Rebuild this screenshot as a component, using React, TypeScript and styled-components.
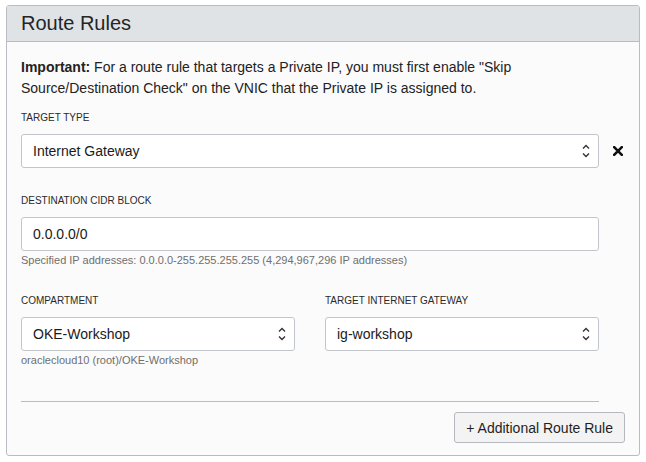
import React from "react";
import styled, { createGlobalStyle } from "styled-components";

const Global = createGlobalStyle`
  html, body { background: #ffffff; }
  body {
    margin: 5px 6px;
    font-family: "Liberation Sans", Arial, sans-serif;
    color: #1f1f1f;
  }
  * { box-sizing: border-box; }
`;

const Panel = styled.section`
  border: 1px solid #b9bdc1;
  border-radius: 3px;
  background: #fbfbfb;
  overflow: hidden;
`;

const Header = styled.header`
  height: 36px;
  display: flex;
  align-items: center;
  padding: 0 14px;
  background: #dfe3e6;
  border-bottom: 1px solid #b9bdc1;
`;

const Title = styled.h2`
  margin: 0;
  font-size: 20px;
  font-weight: 400;
  color: #252525;
`;

const Body = styled.div`
  padding: 15px 14px 12px 14px;
`;

const Note = styled.p`
  margin: 0 0 12px 0;
  font-size: 14px;
  line-height: 21px;
  color: #222;
  strong { font-weight: 700; }
`;

const FieldArea = styled.div`
  width: calc(100% - 26px);
`;

const Field = styled.div<{ $top?: number }>`
  margin-top: ${(p) => p.$top ?? 0}px;
`;

const Label = styled.div`
  font-size: 10px;
  line-height: 14px;
  text-transform: uppercase;
  color: #2a2a2a;
  margin-bottom: 9px;
`;

const Row = styled.div`
  display: flex;
  align-items: center;
  width: calc(100% + 26px);
`;

const Control = styled.div`
  position: relative;
  flex: 1;
  height: 34px;
  display: flex;
  align-items: center;
  padding: 0 11px;
  background: #ffffff;
  border: 1px solid #c2c6ca;
  border-radius: 3px;
  font-size: 14px;
  color: #1a1a1a;
`;

const Chevrons = styled.svg`
  position: absolute;
  right: 8px;
  top: 50%;
  transform: translateY(-50%);
`;

const RemoveButton = styled.button`
  width: 26px;
  height: 34px;
  border: 0;
  background: transparent;
  padding: 0 0 0 14px;
  display: flex;
  align-items: center;
  cursor: pointer;
`;

const Help = styled.div`
  font-size: 11px;
  line-height: 14px;
  margin-top: 2px;
  color: #6f6f6f;
`;

const Grid = styled.div`
  display: grid;
  grid-template-columns: 1fr 1fr;
  column-gap: 30px;
  margin-top: 27px;
`;

const Divider = styled.hr`
  border: 0;
  border-top: 1px solid #b9bdc1;
  margin: 34px 0 0 0;
`;

const Footer = styled.div`
  display: flex;
  justify-content: flex-end;
  margin-top: 10px;
`;

const AddButton = styled.button`
  height: 31px;
  padding: 0 11px;
  font-family: "Liberation Sans", Arial, sans-serif;
  font-size: 14px;
  color: #1f1f1f;
  background: #f3f3f3;
  border: 1px solid #b5b9bd;
  border-radius: 3px;
`;

const SelectChevrons = () => (
  <Chevrons width="8" height="16" viewBox="0 0 8 16">
    <path d="M1 5.5 L4 2.5 L7 5.5" fill="none" stroke="#333" strokeWidth="1.4" />
    <path d="M1 10.5 L4 13.5 L7 10.5" fill="none" stroke="#333" strokeWidth="1.4" />
  </Chevrons>
);

const Select = ({ value }: { value: string }) => (
  <Control>
    {value}
    <SelectChevrons />
  </Control>
);

const CloseIcon = () => (
  <svg width="10" height="10" viewBox="0 0 10 10">
    <path d="M1.2 1.2 L8.8 8.8 M8.8 1.2 L1.2 8.8" stroke="#111" strokeWidth="2.6" strokeLinecap="square" />
  </svg>
);

export default function App() {
  return (
    <>
      <Global />
      <Panel>
        <Header>
          <Title>Route Rules</Title>
        </Header>
        <Body>
          <Note>
            <strong>Important:</strong> For a route rule that targets a Private IP, you must first
            enable "Skip Source/Destination Check" on the VNIC that the Private IP is assigned to.
          </Note>
          <FieldArea>
            <Field>
              <Label>Target Type</Label>
              <Row>
                <Select value="Internet Gateway" />
                <RemoveButton aria-label="Remove">
                  <CloseIcon />
                </RemoveButton>
              </Row>
            </Field>
            <Field $top={26}>
              <Label>Destination CIDR Block</Label>
              <Control>0.0.0.0/0</Control>
              <Help>Specified IP addresses: 0.0.0.0-255.255.255.255 (4,294,967,296 IP addresses)</Help>
            </Field>
            <Grid>
              <Field>
                <Label>Compartment</Label>
                <Select value="OKE-Workshop" />
                <Help>oraclecloud10 (root)/OKE-Workshop</Help>
              </Field>
              <Field>
                <Label>Target Internet Gateway</Label>
                <Select value="ig-workshop" />
              </Field>
            </Grid>
            <Divider />
          </FieldArea>
          <Footer>
            <AddButton>+ Additional Route Rule</AddButton>
          </Footer>
        </Body>
      </Panel>
    </>
  );
}
